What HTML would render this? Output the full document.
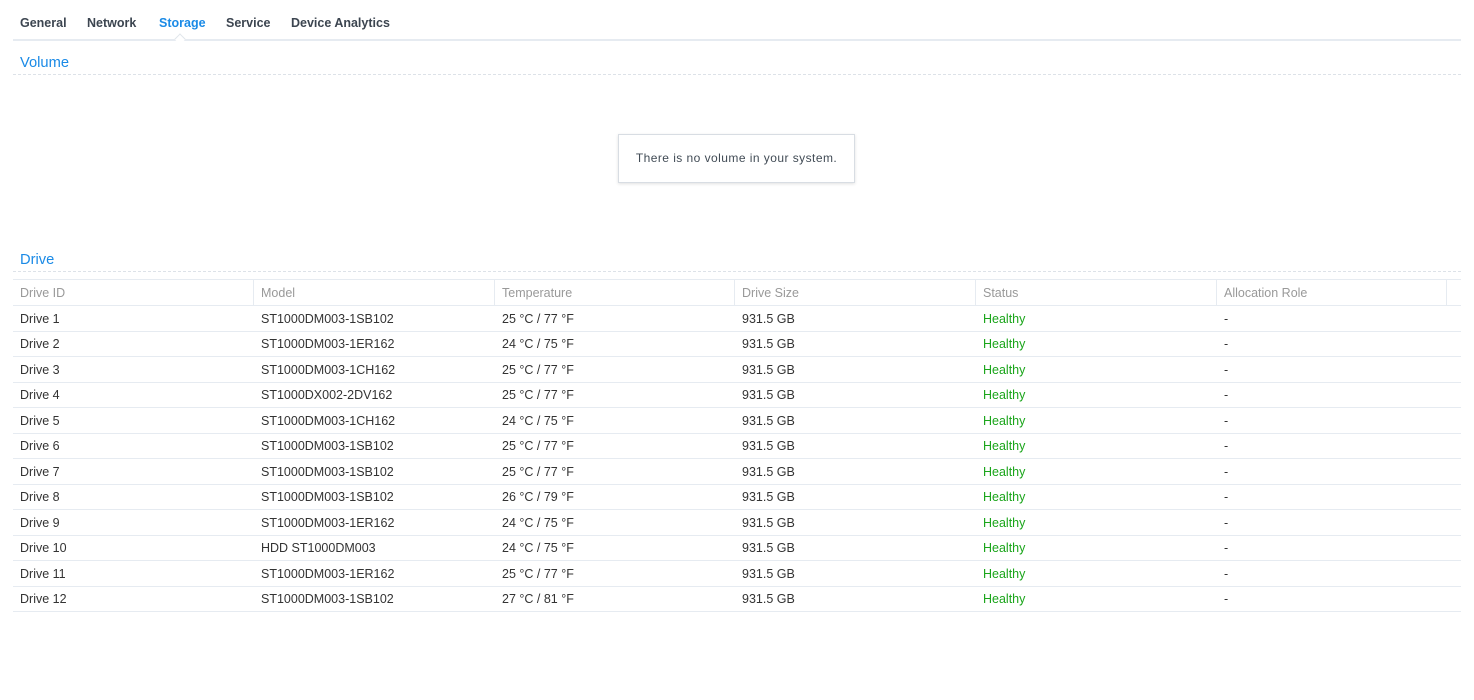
<!DOCTYPE html>
<html><head><meta charset="utf-8"><style>
body{margin:0;width:1474px;height:700px;background:#fff;font-family:"Liberation Sans",sans-serif;position:relative;overflow:hidden;color:#2f3a45}
.a{position:absolute;white-space:nowrap}
.tab{top:16px;font-size:12.5px;font-weight:bold;color:#3c4550}
.t{font-size:14.7px;color:#1a8ae6}
.row{position:absolute;left:13px;width:1448px;height:25px;border-bottom:1px solid #e6ebf1;font-size:12.5px;color:#333}
.row span{position:absolute;top:6px}
.hd{color:#999}
.g{color:#1aa51a}
</style></head><body>
<div class="a tab" style="left:20px">General</div>
<div class="a tab" style="left:87px">Network</div>
<div class="a tab" style="left:159px;color:#1a8ae6">Storage</div>
<div class="a tab" style="left:226px">Service</div>
<div class="a tab" style="left:291px">Device Analytics</div>
<div class="a" style="left:13px;top:39px;width:1448px;height:2px;background:#e6ebf1"></div>
<div class="a" style="left:176px;top:35px;width:7px;height:7px;background:#fff;border-left:1px solid #e0e5eb;border-top:1px solid #e0e5eb;transform:rotate(45deg)"></div>
<div class="a t" style="left:20px;top:55px">Volume</div>
<div class="a" style="left:13px;top:74px;width:1448px;border-top:1px dashed #dde2e8"></div>
<div class="a" style="left:618px;top:134px;width:235px;height:47px;border:1px solid #d8dde3;box-shadow:0 1px 3px rgba(0,0,0,.12);font-size:12px;letter-spacing:0.45px;color:#414b55;text-align:center;line-height:47px">There is no volume in your system.</div>
<div class="a t" style="left:20px;top:252px">Drive</div>
<div class="a" style="left:13px;top:271px;width:1448px;border-top:1px dashed #dde2e8"></div>
<div class="a" style="left:13px;top:279px;width:1448px;border-top:1px solid #e6ebf1"></div>
<div class="row hd" style="top:280px">
<span style="left:7px">Drive ID</span><span style="left:248px">Model</span><span style="left:489px">Temperature</span><span style="left:729px">Drive Size</span><span style="left:970px">Status</span><span style="left:1211px">Allocation Role</span>
<i style="position:absolute;left:240px;top:0;height:25px;border-left:1px solid #e6ebf1"></i>
<i style="position:absolute;left:481px;top:0;height:25px;border-left:1px solid #e6ebf1"></i>
<i style="position:absolute;left:721px;top:0;height:25px;border-left:1px solid #e6ebf1"></i>
<i style="position:absolute;left:962px;top:0;height:25px;border-left:1px solid #e6ebf1"></i>
<i style="position:absolute;left:1203px;top:0;height:25px;border-left:1px solid #e6ebf1"></i>
<i style="position:absolute;left:1433px;top:0;height:25px;border-left:1px solid #e6ebf1"></i>
</div>
<div class="row" style="top:305.5px"><span style="left:7px">Drive 1</span><span style="left:248px">ST1000DM003-1SB102</span><span style="left:489px">25 °C / 77 °F</span><span style="left:729px">931.5 GB</span><span class="g" style="left:970px">Healthy</span><span style="left:1211px">-</span></div>
<div class="row" style="top:331px"><span style="left:7px">Drive 2</span><span style="left:248px">ST1000DM003-1ER162</span><span style="left:489px">24 °C / 75 °F</span><span style="left:729px">931.5 GB</span><span class="g" style="left:970px">Healthy</span><span style="left:1211px">-</span></div>
<div class="row" style="top:356.5px"><span style="left:7px">Drive 3</span><span style="left:248px">ST1000DM003-1CH162</span><span style="left:489px">25 °C / 77 °F</span><span style="left:729px">931.5 GB</span><span class="g" style="left:970px">Healthy</span><span style="left:1211px">-</span></div>
<div class="row" style="top:382px"><span style="left:7px">Drive 4</span><span style="left:248px">ST1000DX002-2DV162</span><span style="left:489px">25 °C / 77 °F</span><span style="left:729px">931.5 GB</span><span class="g" style="left:970px">Healthy</span><span style="left:1211px">-</span></div>
<div class="row" style="top:407.5px"><span style="left:7px">Drive 5</span><span style="left:248px">ST1000DM003-1CH162</span><span style="left:489px">24 °C / 75 °F</span><span style="left:729px">931.5 GB</span><span class="g" style="left:970px">Healthy</span><span style="left:1211px">-</span></div>
<div class="row" style="top:433px"><span style="left:7px">Drive 6</span><span style="left:248px">ST1000DM003-1SB102</span><span style="left:489px">25 °C / 77 °F</span><span style="left:729px">931.5 GB</span><span class="g" style="left:970px">Healthy</span><span style="left:1211px">-</span></div>
<div class="row" style="top:458.5px"><span style="left:7px">Drive 7</span><span style="left:248px">ST1000DM003-1SB102</span><span style="left:489px">25 °C / 77 °F</span><span style="left:729px">931.5 GB</span><span class="g" style="left:970px">Healthy</span><span style="left:1211px">-</span></div>
<div class="row" style="top:484px"><span style="left:7px">Drive 8</span><span style="left:248px">ST1000DM003-1SB102</span><span style="left:489px">26 °C / 79 °F</span><span style="left:729px">931.5 GB</span><span class="g" style="left:970px">Healthy</span><span style="left:1211px">-</span></div>
<div class="row" style="top:509.5px"><span style="left:7px">Drive 9</span><span style="left:248px">ST1000DM003-1ER162</span><span style="left:489px">24 °C / 75 °F</span><span style="left:729px">931.5 GB</span><span class="g" style="left:970px">Healthy</span><span style="left:1211px">-</span></div>
<div class="row" style="top:535px"><span style="left:7px">Drive 10</span><span style="left:248px">HDD ST1000DM003</span><span style="left:489px">24 °C / 75 °F</span><span style="left:729px">931.5 GB</span><span class="g" style="left:970px">Healthy</span><span style="left:1211px">-</span></div>
<div class="row" style="top:560.5px"><span style="left:7px">Drive 11</span><span style="left:248px">ST1000DM003-1ER162</span><span style="left:489px">25 °C / 77 °F</span><span style="left:729px">931.5 GB</span><span class="g" style="left:970px">Healthy</span><span style="left:1211px">-</span></div>
<div class="row" style="top:586px"><span style="left:7px">Drive 12</span><span style="left:248px">ST1000DM003-1SB102</span><span style="left:489px">27 °C / 81 °F</span><span style="left:729px">931.5 GB</span><span class="g" style="left:970px">Healthy</span><span style="left:1211px">-</span></div>
</body></html>
